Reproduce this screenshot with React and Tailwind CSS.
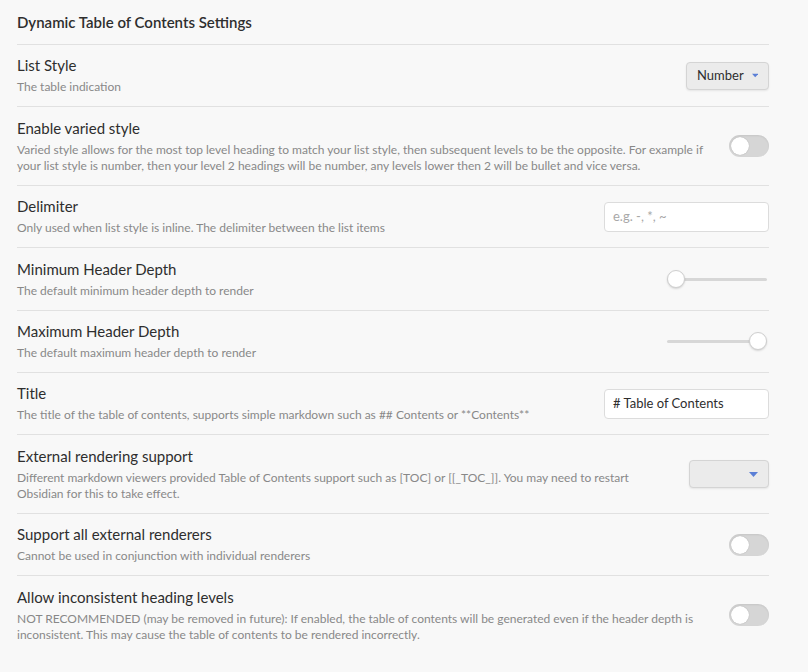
import React from 'react';

const font = { fontFamily: 'Lato, "Noto Sans", sans-serif' };

function Toggle() {
  return (
    <div className="relative h-[22px] w-[40px] rounded-full bg-[#d6d6d6] shadow-[inset_0_1px_2px_rgba(0,0,0,0.08)]">
      <div className="absolute left-[2px] top-[2px] h-[18px] w-[18px] rounded-full bg-white shadow-[0_0_1px_rgba(0,0,0,0.3)]" />
    </div>
  );
}

function Dropdown({ label, width }) {
  return (
    <div
      className={`flex h-[28px] ${width} items-center justify-end gap-2 rounded-[4px] border border-[#d4d4d4] bg-[#ebebeb] px-[10px] text-[13px] text-[#2e2e2e] shadow-[0_1px_2px_rgba(0,0,0,0.08)]`}
    >
      {label && <span>{label}</span>}
      <svg width="9" height="5" viewBox="0 0 9 5">
        <path d="M0 0h9L4.5 5z" fill="#5b7fd6" />
      </svg>
    </div>
  );
}

function TextInput({ value, placeholder }) {
  return (
    <div className="flex h-[30px] w-[165px] items-center rounded-[4px] border border-[#dcdcdc] bg-white px-[8px] text-[13px]">
      {value ? <span className="text-[#2e2e2e]">{value}</span> : <span className="text-[#a8a8a8]">{placeholder}</span>}
    </div>
  );
}

function Slider({ atEnd }) {
  return (
    <div className="relative mr-[2px] h-[20px] w-[100px]">
      <div className="absolute left-0 right-0 top-[9px] h-[3px] rounded-full bg-[#d7d7d7]" />
      <div
        className={`absolute top-[1px] h-[18px] w-[18px] rounded-full border border-[#cfcfcf] bg-white shadow-[0_1px_2px_rgba(0,0,0,0.15)] ${atEnd ? 'right-[0px]' : 'left-[0px]'}`}
      />
    </div>
  );
}

function Setting({ name, desc, children }) {
  return (
    <div className="flex items-center border-t border-[#e1e1e1] py-[10.4px]">
      <div className="mr-[20px] flex-1">
        <div className="text-[15px] leading-[20px] text-[#2e2e2e]">{name}</div>
        <div className="mt-[4px] text-[12px] leading-[16.5px] text-[#888888]">{desc}</div>
      </div>
      <div className="flex shrink-0 justify-end">{children}</div>
    </div>
  );
}

export default function App() {
  return (
    <div className="min-h-screen bg-[#f8f8f8] pl-[17px] pr-[39px]" style={font}>
      <div className="flex h-[44px] items-center text-[15px] font-semibold text-[#2e2e2e]">
        Dynamic Table of Contents Settings
      </div>

      <Setting name="List Style" desc="The table indication">
        <Dropdown label="Number" width="w-[83px]" />
      </Setting>

      <Setting
        name="Enable varied style"
        desc="Varied style allows for the most top level heading to match your list style, then subsequent levels to be the opposite. For example if your list style is number, then your level 2 headings will be number, any levels lower then 2 will be bullet and vice versa."
      >
        <Toggle />
      </Setting>

      <Setting name="Delimiter" desc="Only used when list style is inline. The delimiter between the list items">
        <TextInput placeholder="e.g. -, *, ~" />
      </Setting>

      <Setting name="Minimum Header Depth" desc="The default minimum header depth to render">
        <Slider />
      </Setting>

      <Setting name="Maximum Header Depth" desc="The default maximum header depth to render">
        <Slider atEnd />
      </Setting>

      <Setting
        name="Title"
        desc="The title of the table of contents, supports simple markdown such as ## Contents or **Contents**"
      >
        <TextInput value="# Table of Contents" />
      </Setting>

      <Setting
        name="External rendering support"
        desc="Different markdown viewers provided Table of Contents support such as [TOC] or [[_TOC_]]. You may need to restart Obsidian for this to take effect."
      >
        <Dropdown width="w-[80px]" />
      </Setting>

      <Setting name="Support all external renderers" desc="Cannot be used in conjunction with individual renderers">
        <Toggle />
      </Setting>

      <Setting
        name="Allow inconsistent heading levels"
        desc="NOT RECOMMENDED (may be removed in future): If enabled, the table of contents will be generated even if the header depth is inconsistent. This may cause the table of contents to be rendered incorrectly."
      >
        <Toggle />
      </Setting>
    </div>
  );
}
